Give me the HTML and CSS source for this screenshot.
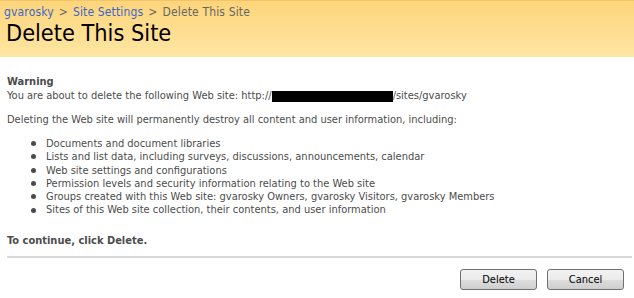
FILE: index.html
```html
<!DOCTYPE html>
<html>
<head>
<meta charset="utf-8">
<link rel="stylesheet" href="styles.css">
</head>
<body>
<div class="header">
  <div class="crumbs"><a class="crumb">gvarosky</a><span class="sep">&gt;</span><a class="crumb">Site Settings</a><span class="sep">&gt;</span><span class="current">Delete This Site</span></div>
  <h1 class="title">Delete This Site</h1>
</div>
<div class="content">
  <div class="warn-title">Warning</div>
  <div class="line">You are about to delete the following Web site: http://<span class="redact"></span>/sites/gvarosky</div>
  <p class="para">Deleting the Web site will permanently destroy all content and user information, including:</p>
  <ul class="items">
    <li>Documents and document libraries</li>
    <li>Lists and list data, including surveys, discussions, announcements, calendar</li>
    <li>Web site settings and configurations</li>
    <li>Permission levels and security information relating to the Web site</li>
    <li>Groups created with this Web site: gvarosky Owners, gvarosky Visitors, gvarosky Members</li>
    <li>Sites of this Web site collection, their contents, and user information</li>
  </ul>
  <div class="continue">To continue, click Delete.</div>
  <div class="rule"></div>
  <div class="actions">
    <button class="btn">Delete</button>
    <button class="btn">Cancel</button>
  </div>
</div>
</body>
</html>
```
FILE: styles.css
```css
html, body { margin: 0; padding: 0; background: #fff; }
body {
  font-family: "DejaVu Sans Condensed", "DejaVu Sans", sans-serif;
  font-size: 11px;
  color: #4c4c4c;
  width: 634px;
  height: 298px;
  overflow: hidden;
}
.header {
  height: 57px;
  box-sizing: border-box;
  border-top: 1px solid #f3c46a;
  background: linear-gradient(to bottom, #fdd57a 0%, #fee6a3 100%);
  padding: 4px 0 0 4px;
}
.crumbs {
  font-size: 12px;
  line-height: 14px;
  letter-spacing: 0.15px;
  color: #666;
  display: flex;
  gap: 5px;
}
.crumb { color: #3d66c6; text-decoration: none; }
.sep { color: #666; }
.current { color: #666; }
.title {
  margin: 0 0 0 2px;
  font-family: "DejaVu Sans Condensed", "DejaVu Sans", sans-serif;
  font-weight: normal;
  font-size: 23.3px;
  line-height: 28px;
  color: #000;
}
.content { padding: 18px 2px 0 7px; }
.warn-title { font-weight: bold; line-height: 14px; color: #4c4c4c; }
.line { line-height: 14px; display: flex; align-items: center; }
.redact { display: inline-block; width: 121px; height: 11px; background: #000; }
.para { margin: 10px 0 0; line-height: 14px; }
.items {
  margin: 10px 0 0;
  padding-left: 24px;
  line-height: 13.3px;
  list-style: none;
}
.items li { display: flex; align-items: center; }
.items li::before {
  content: "";
  flex: none;
  width: 5px;
  height: 5px;
  border-radius: 50%;
  background: #4c4c4c;
  margin-right: 10px;
}
.continue { margin-top: 17px; font-weight: bold; line-height: 14px; }
.rule { margin-top: 8px; height: 2px; background: #d8d8d8; }
.actions {
  display: flex;
  justify-content: flex-end;
  gap: 10px;
  padding: 11px 8px 0 0;
}
.btn {
  width: 77px;
  height: 21px;
  font-family: "DejaVu Sans Condensed", "DejaVu Sans", sans-serif;
  font-size: 11px;
  color: #000;
  border: 1px solid #707070;
  border-radius: 3px;
  background: linear-gradient(to bottom, #f2f2f2 0%, #ebebeb 50%, #dddddd 51%, #cfcfcf 100%);
  padding: 0;
}
```
